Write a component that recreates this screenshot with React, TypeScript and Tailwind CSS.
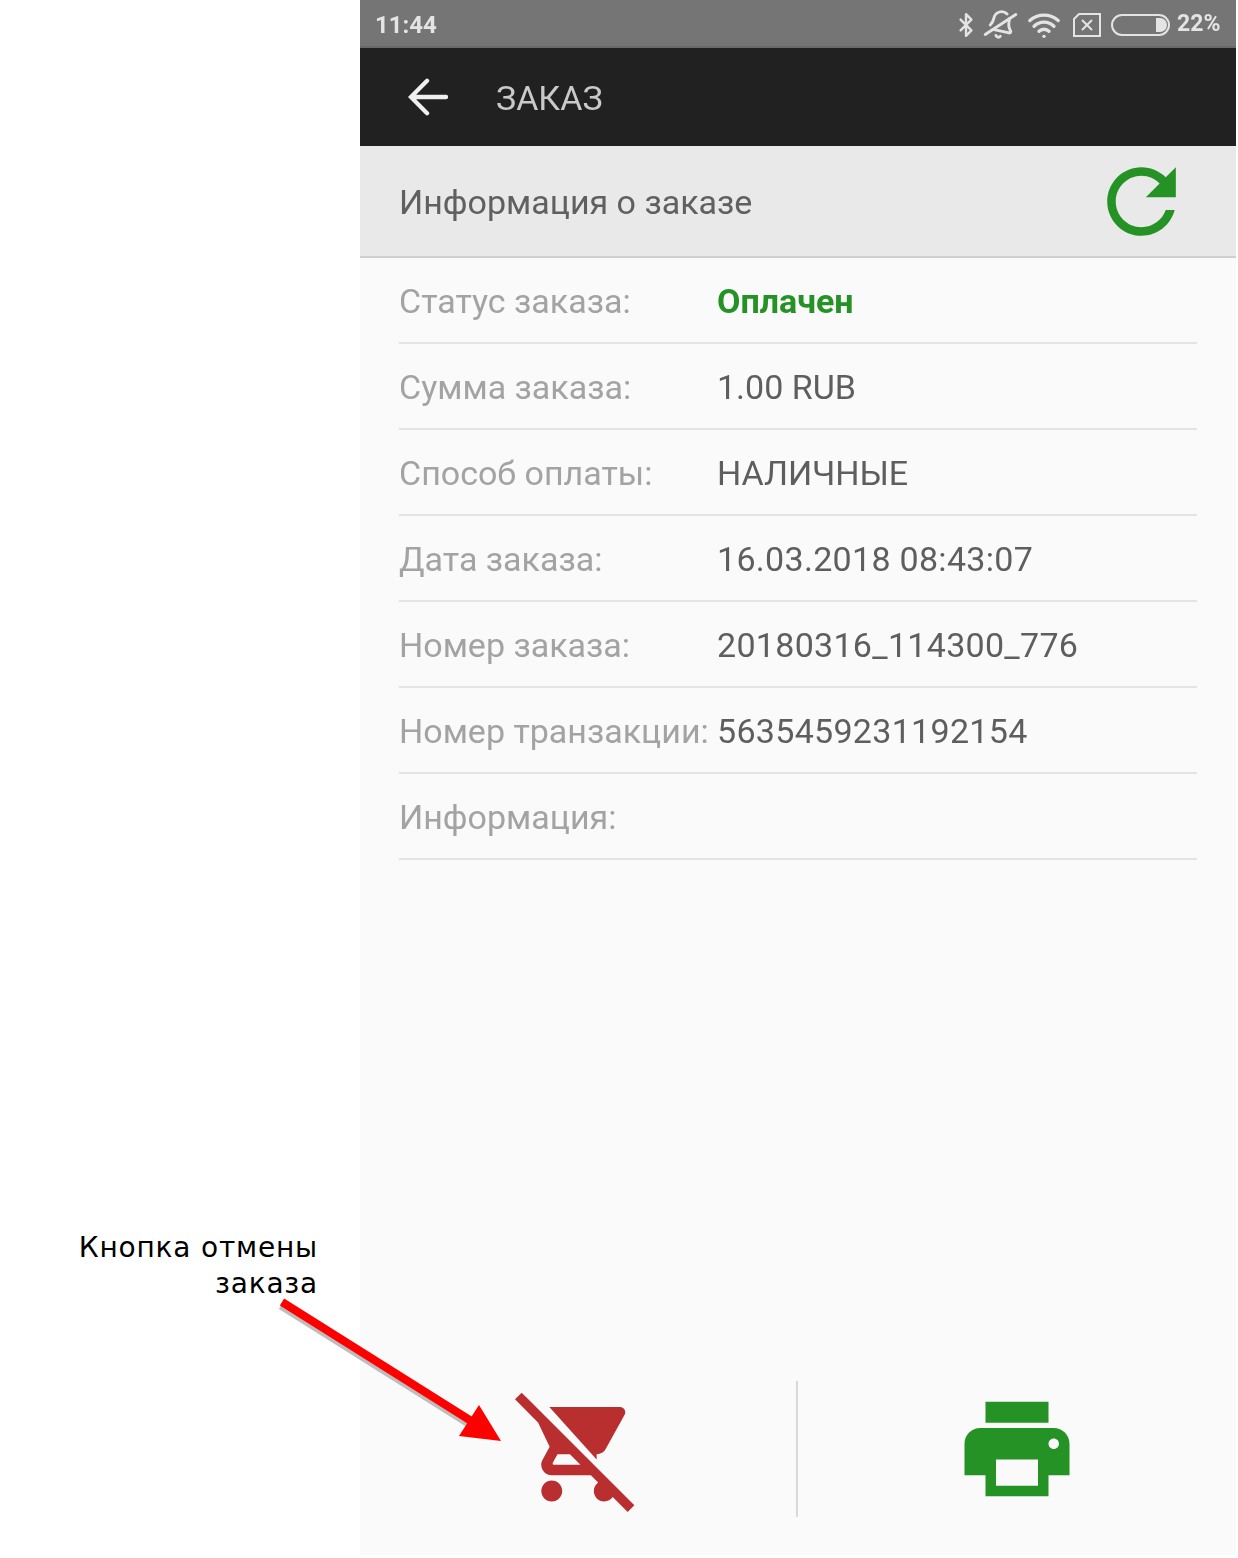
import { Bluetooth, BellOff, Wifi } from 'lucide-react'

const rows = [
  { label: 'Статус заказа:', value: 'Оплачен', paid: true },
  { label: 'Сумма заказа:', value: '1.00 RUB' },
  { label: 'Способ оплаты:', value: 'НАЛИЧНЫЕ' },
  { label: 'Дата заказа:', value: '16.03.2018 08:43:07', digits: true },
  { label: 'Номер заказа:', value: '20180316_114300_776', digits: true },
  { label: 'Номер транзакции:', value: '5635459231192154', digits: true },
  { label: 'Информация:', value: '' },
]

function StatusBar() {
  return (
    <div className="h-[48px] bg-[#757575] border-b-2 border-[#6a6a6a] flex items-center justify-between pt-[3px] pl-[15px] pr-[16px] text-[#e4e4e4] font-bold text-[24px] font-['Roboto',sans-serif]">
      <span>11:44</span>
      <div className="flex items-center">
        <Bluetooth className="w-[26px] h-[26px]" strokeWidth={2.2} />
        <BellOff className="w-[31px] h-[31px] ml-[6px] -scale-x-100 rotate-12" strokeWidth={2.2} />
        <Wifi className="w-[34px] h-[34px] ml-[11px]" strokeWidth={2.4} />
        <svg viewBox="0 0 28 24" className="w-[28px] h-[24px] ml-[12px]" fill="none" stroke="currentColor" strokeWidth="2">
          <path d="M1 6 L6 1 H27 V23 H1 Z" />
          <path d="M9 7 L19 17 M19 7 L9 17" />
        </svg>
        <svg viewBox="0 0 60 24" className="w-[60px] h-[24px] ml-[10px]" fill="none">
          <rect x="1" y="2" width="57" height="20" rx="10" stroke="currentColor" strokeWidth="2" />
          <path d="M45 5 H49 A7 7 0 0 1 49 19 H45 Z" fill="currentColor" />
        </svg>
        <span className="ml-[6px] w-[43px] text-[23px]">22%</span>
      </div>
    </div>
  )
}

export default function App() {
  return (
    <div className="relative w-[1238px] h-[1558px] bg-white flex overflow-hidden">
      <div className="w-[360px] shrink-0 flex flex-col justify-end items-end pr-[42px] pb-[256px]">
        <p className="text-right text-[28px] leading-[36px] tracking-[0.8px] text-black font-['DejaVu_Sans',sans-serif]">
          Кнопка отмены
          <br />
          заказа
        </p>
      </div>

      <div className="w-[876px] h-[1555px] bg-[#fafafa] flex flex-col font-['Roboto',sans-serif] blur-[0.5px]">
        <StatusBar />

        <div className="h-[98px] bg-[#212121] flex items-center text-[#c9c9c9] text-[34px]">
          <svg viewBox="0 0 42 40" className="w-[40px] h-[38px] ml-[48px] text-[#efefef]" fill="none" stroke="currentColor" strokeWidth="4.5" strokeLinecap="round">
            <path d="M40 20 H4 M20 3 L3 20 L20 37" />
          </svg>
          <span className="ml-[48px] pt-[2px]">ЗАКАЗ</span>
        </div>

        <div className="h-[112px] bg-[#e9e9e9] border-b-2 border-[#cfcfcf] flex items-center justify-between pl-[39px] pr-[43px]">
          <span className="text-[34px] text-[#606060] pt-[2px]">Информация о заказе</span>
          <svg viewBox="0 0 24 24" className="w-[103px] h-[103px] text-[#259225]" fill="currentColor">
            <path d="M17.65 6.35C16.2 4.9 14.21 4 12 4c-4.42 0-7.99 3.58-7.99 8s3.57 8 7.99 8c3.73 0 6.84-2.55 7.73-6h-2.08c-.82 2.33-3.04 4-5.65 4-3.31 0-6-2.69-6-6s2.69-6 6-6c1.66 0 3.14.69 4.22 1.78L13 11h7V4l-2.35 2.35z" />
          </svg>
        </div>

        <div className="flex-1 px-[39px]">
          {rows.map((row) => (
            <div key={row.label} className="h-[86px] pt-[2px] border-b-2 border-[#e4e4e4] flex items-center text-[34px]">
              <span className="w-[318px] shrink-0 text-[#a3a3a3] whitespace-nowrap">{row.label}</span>
              <span className={row.paid ? 'font-bold text-[#259225]' : row.digits ? 'text-[#5e5e5e] tracking-[0.3px]' : 'text-[#5e5e5e]'}>
                {row.value}
              </span>
            </div>
          ))}
        </div>

        <div className="h-[136px] mb-[38px] flex">
          <div className="w-[436px] flex items-center justify-center">
            <svg viewBox="0 0 24 24" className="w-[126px] h-[126px] text-[#b92e2e]" fill="currentColor">
              <path d="M22.73 22.73L2.77 2.77 2 2l-.73-.73L0 2.54l4.39 4.39 2.21 4.66-1.35 2.45c-.16.28-.25.61-.25.96 0 1.1.9 2 2 2h7.46l1.38 1.38c-.5.36-.83.95-.83 1.62 0 1.1.89 2 1.99 2 .67 0 1.26-.33 1.62-.84L21.46 24l1.27-1.27zM7.42 15c-.14 0-.25-.11-.25-.25l.03-.12.9-1.63h2.36l2 2H7.42zm8.13-2c.75 0 1.41-.41 1.75-1.03l3.58-6.49c.08-.14.12-.31.12-.48 0-.55-.45-1-1-1H6.54l9.01 10zM7 18c-1.1 0-1.99.9-1.99 2S5.9 22 7 22s2-.9 2-2-.9-2-2-2z" />
            </svg>
          </div>
          <div className="w-[2px] bg-[#d9d9d9]" />
          <div className="flex-1 flex items-center justify-center">
            <svg viewBox="0 0 24 24" className="w-[126px] h-[126px] text-[#259225]" fill="currentColor">
              <path d="M19 8H5c-1.66 0-3 1.34-3 3v6h4v4h12v-4h4v-6c0-1.66-1.34-3-3-3zm-3 11H8v-5h8v5zm3-7c-.55 0-1-.45-1-1s.45-1 1-1 1 .45 1 1-.45 1-1 1zm-1-9H6v4h12V3z" />
            </svg>
          </div>
        </div>
      </div>

      {/* annotation arrow sits over the phone screen */}
      <svg viewBox="0 0 1238 1558" className="absolute inset-0 w-[1238px] h-[1558px] pointer-events-none">
        <path d="M281 1305.5 L476 1428" stroke="#bdbdbd" strokeWidth="8" fill="none" />
        <path d="M282 1302 L476 1424" stroke="#ff0000" strokeWidth="8" fill="none" />
        <path d="M479 1405 L501 1441 L459 1436 Z" fill="#ff0000" />
      </svg>
    </div>
  )
}
